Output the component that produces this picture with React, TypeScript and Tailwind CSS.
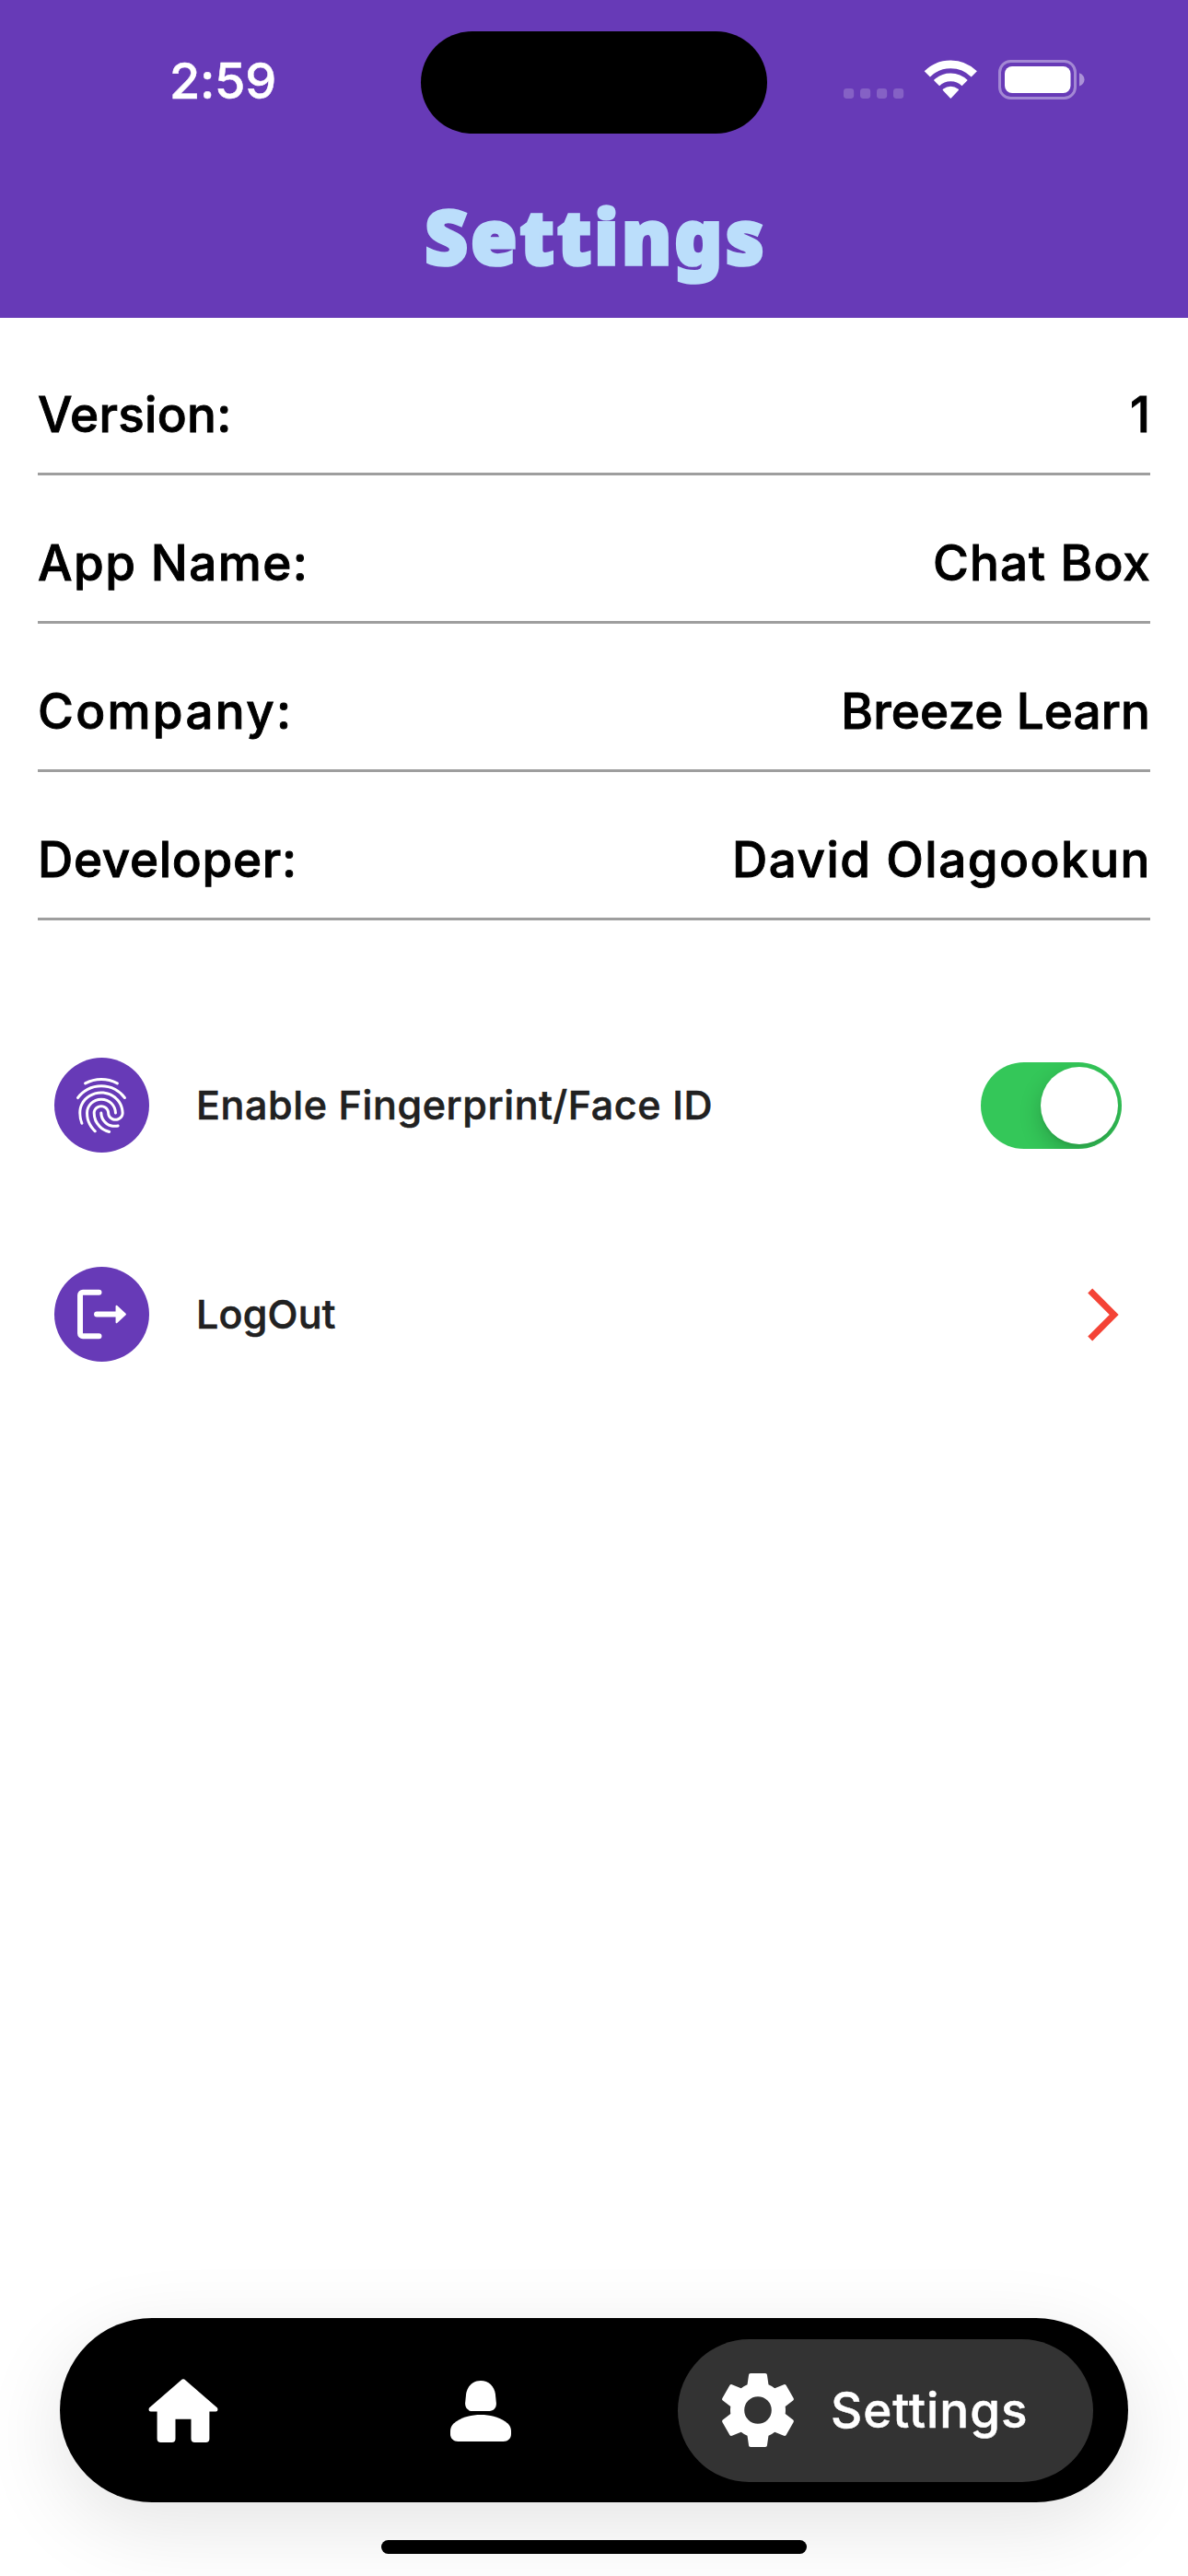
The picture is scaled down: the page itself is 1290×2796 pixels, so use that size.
import { MdFingerprint } from "react-icons/md";

const details = [
  { label: "Version:", labelClass: "tracking-[0.3px]", value: "1", valueClass: "" },
  { label: "App Name:", labelClass: "tracking-[1.4px]", value: "Chat Box", valueClass: "tracking-[1.1px] -mr-[1px]" },
  { label: "Company:", labelClass: "tracking-[2.3px]", value: "Breeze Learn", valueClass: "tracking-[0.1px]" },
  { label: "Developer:", labelClass: "tracking-[0.7px]", value: "David Olagookun", valueClass: "tracking-[1.5px] -mr-[1px]" },
];

function SignalDots() {
  return (
    <svg className="h-12 w-[66px]" viewBox="0 0 66 48" fill="#fff" fillOpacity="0.2">
      <rect x="0" y="33" width="11.2" height="11" rx="3.4" />
      <rect x="18" y="33" width="11.2" height="11" rx="3.4" />
      <rect x="36" y="33" width="11.2" height="11" rx="3.4" />
      <rect x="54" y="33" width="11.2" height="11" rx="3.4" />
    </svg>
  );
}

function WifiIcon() {
  return (
    <svg className="ml-[21px] h-12 w-[59px]" viewBox="0 0 59 48" fill="none" stroke="#fff" strokeWidth="8.8">
      <path d="M3.8 17.4A36 36 0 0 1 54.8 17.4" />
      <path d="M14 27.2A21.6 21.6 0 0 1 44.6 27.2" />
      <path d="M21.3 34.4Q29.3 28.6 37.3 34.4L29.3 43Z" fill="#fff" strokeWidth="1.4" strokeLinejoin="round" />
    </svg>
  );
}

function BatteryIcon() {
  return (
    <svg className="ml-[22px] h-12 w-[95px]" viewBox="0 0 95 48">
      <rect x="1.5" y="3.5" width="82" height="40" rx="12" fill="none" stroke="#fff" strokeOpacity="0.4" strokeWidth="3" />
      <rect x="7" y="9" width="71.5" height="29" rx="8" fill="#fff" />
      <path d="M88 16.3C95.4 19.2 95.4 27.6 88 30.5Z" fill="#fff" fillOpacity="0.45" />
    </svg>
  );
}

function LogoutIcon() {
  return (
    <svg className="size-[103px]" viewBox="0 0 104 104" fill="none" stroke="#fff" strokeWidth="6" strokeLinecap="round">
      <path d="M49 28H31.3A3 3 0 0 0 28.3 31V73A3 3 0 0 0 31.3 76H49" />
      <path d="M46.5 52H70" />
      <path d="M68.2 43.2L77.7 52L68.2 60.8Z" fill="#fff" strokeWidth="2" strokeLinejoin="round" />
    </svg>
  );
}

function HomeIcon() {
  return (
    <svg className="h-[69px] w-[76px]" viewBox="0 0 76 69" fill="#fff">
      <path d="M35.6 1.4Q38 -0.7 40.4 1.4L75 31.4Q76.4 35 73.4 35.6H66.4V65Q66.4 69 62.4 69H50.5Q46.5 69 46.5 65V43.8H29.5V65Q29.5 69 25.5 69H13.6Q9.6 69 9.6 65V35.6H2.6Q-0.4 35 1 31.4Z" />
    </svg>
  );
}

function PersonIcon() {
  return (
    <svg className="h-[66px] w-[66px]" viewBox="0 0 66 66" fill="#fff">
      <path d="M33 0C41.5 0 47.8 6 48.9 14.5L49.9 24.5C50.2 29.5 46.8 33 42.4 33H23.6C19.2 33 15.8 29.5 16.1 24.5L17.1 14.5C18.2 6 24.5 0 33 0Z" />
      <path d="M33 37C43 37 52 39.4 59.5 44.2C64 47.2 66 50.5 66 55V58C66 62.8 62.3 66 57.7 66H8.3C3.7 66 0 62.8 0 58V55C0 50.5 2 47.2 6.5 44.2C14 39.4 23 37 33 37Z" />
    </svg>
  );
}

function GearIcon() {
  return (
    <svg className="size-[96px]" viewBox="0 0 24 24" fill="#fff">
      <path d="M19.43 12.98c.04-.32.07-.64.07-.98s-.03-.66-.07-.98l2.11-1.65c.19-.15.24-.42.12-.64l-2-3.46c-.12-.22-.39-.3-.61-.22l-2.49 1c-.52-.4-1.08-.73-1.69-.98l-.38-2.65C14.46 2.18 14.25 2 14 2h-4c-.25 0-.46.18-.49.42l-.38 2.65c-.61.25-1.17.59-1.69.98l-2.49-1c-.23-.09-.49 0-.61.22l-2 3.46c-.13.22-.07.49.12.64l2.11 1.65c-.04.32-.07.65-.07.98s.03.66.07.98l-2.11 1.65c-.19.15-.24.42-.12.64l2 3.46c.12.22.39.3.61.22l2.49-1c.52.4 1.08.73 1.69.98l.38 2.65c.03.24.24.42.49.42h4c.25 0 .46-.18.49-.42l.38-2.65c.61-.25 1.17-.59 1.69-.98l2.49 1c.23.09.49 0 .61-.22l2-3.46c.12-.22.07-.49-.12-.64l-2.11-1.65zM12 15.7a3.7 3.7 0 1 1 0-7.4 3.7 3.7 0 0 1 0 7.4z" />
    </svg>
  );
}

export default function App() {
  return (
    <div className="flex h-[2796px] w-[1290px] flex-col overflow-hidden bg-white font-['Inter',sans-serif] text-black">
      <header className="h-[345px] bg-[#673ab7]">
        <div className="grid h-[178px] grid-cols-[457px_376px_457px] items-center">
          <div className="pb-[2px] pl-[27px] text-center text-[54px] leading-none font-medium tracking-[-0.3px] text-white [-webkit-text-stroke:0.5px_white]">2:59</div>
          <div className="h-[111px] rounded-full bg-black" />
          <div className="flex items-center pb-1 pl-[83px]">
            <SignalDots />
            <WifiIcon />
            <BatteryIcon />
          </div>
        </div>
        <h1 className="flex h-[167px] items-center justify-center pb-[12px] pl-[4px] font-['Noto_Sans',sans-serif] text-[81px] leading-none font-black tracking-[3.2px] text-[#bbdefb] [-webkit-text-stroke:3.5px_#bbdefb]">
          Settings
        </h1>
      </header>

      <main>
        <dl className="mx-[41px] pt-[10px] text-[53px] leading-none font-medium [-webkit-text-stroke:0.9px_black]">
          {details.map((d) => (
            <div key={d.label} className="flex h-[161px] items-center justify-between border-b-[3px] border-[#9e9e9e] pt-[32px]">
              <dt className={d.labelClass}>{d.label}</dt>
              <dd className={d.valueClass}>{d.value}</dd>
            </div>
          ))}
        </dl>

        <div className="mt-[87px] pr-[72px] pl-[58.5px] text-[43px] leading-none font-medium text-[#212121]">
          <div className="flex h-[227px] items-center">
            <div className="flex size-[103px] items-center justify-center rounded-full bg-[#673ab7]">
              <MdFingerprint className="size-[72px] text-white" />
            </div>
            <span className="ml-[51.5px] tracking-[0.6px] [-webkit-text-stroke:0.6px_#212121]">Enable Fingerprint/Face ID</span>
            <div className="ml-auto flex h-[94px] w-[153px] items-center justify-end overflow-hidden rounded-full bg-[#34c759] pr-[4px]">
              <div className="size-[84px] rounded-full bg-white shadow-[0_9px_24px_rgba(0,0,0,0.2),0_3px_3px_rgba(0,0,0,0.06)]" />
            </div>
          </div>
          <div className="flex h-[227px] items-center">
            <div className="size-[103px] rounded-full bg-[#673ab7]">
              <LogoutIcon />
            </div>
            <span className="ml-[51.5px] tracking-[0.2px] [-webkit-text-stroke:0.6px_#212121]">LogOut</span>
            <svg className="mr-[3px] ml-auto h-[58px] w-[35px]" viewBox="0 0 35 58" fill="none" stroke="#f44336" strokeWidth="7">
              <path d="M3.7 3L29.7 29L3.7 55" />
            </svg>
          </div>
        </div>
      </main>

      <nav className="mx-[65px] mt-auto flex h-[200px] shrink-0 items-center rounded-full bg-black shadow-[0_25px_90px_rgba(0,0,0,0.11)]">
        <div className="flex w-[268px] justify-center">
          <HomeIcon />
        </div>
        <div className="flex w-[378px] justify-center pt-[1px]">
          <PersonIcon />
        </div>
        <div className="mr-[38px] ml-auto flex h-[155px] w-[451px] items-center rounded-full bg-[#333333] pl-[39px] text-[53px] leading-none font-medium text-white">
          <GearIcon />
          <span className="ml-[31px] tracking-[1px] [-webkit-text-stroke:0.5px_white]">Settings</span>
        </div>
      </nav>
      <div className="mx-auto mt-[41px] mb-[24px] h-[15px] w-[462px] shrink-0 rounded-full bg-black" />
    </div>
  );
}
